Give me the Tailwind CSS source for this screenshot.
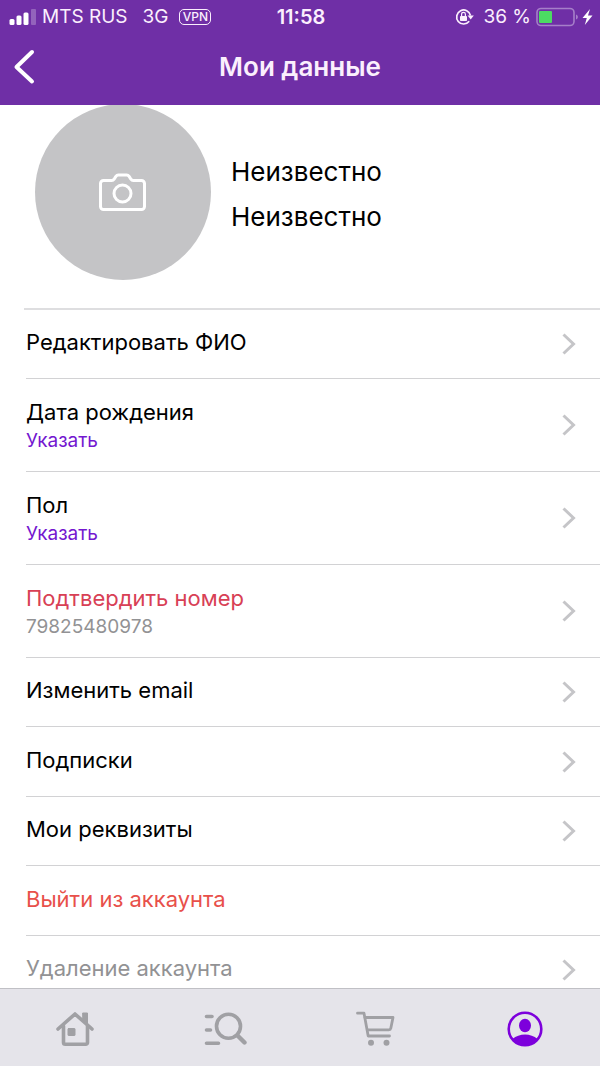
<!DOCTYPE html>
<html lang="ru">
<head>
<meta charset="utf-8">
<meta name="viewport" content="width=device-width, initial-scale=1">
<title>Мои данные</title>
<script src="https://cdn.jsdelivr.net/npm/@tailwindcss/browser@4"></script>
</head>
<body class="flex h-screen flex-col overflow-hidden bg-white font-['Inter','Noto_Sans',sans-serif] text-black">
<svg class="hidden" aria-hidden="true">
  <symbol id="chevron" viewBox="0 0 14 22"><path d="M1.5 1.5 11.500 11l-10 9.500" fill="none" stroke="#c5c5c8" stroke-width="3"/></symbol>
</svg>

<header class="shrink-0 bg-[#6f2fa6] text-[#fbeffd]">
  <div class="grid h-[33px] grid-cols-[1fr_auto_1fr] items-center pl-[9px] pr-[7px] text-[19px] leading-8">
    <div class="flex items-center">
      <svg class="mr-[6px] h-4 w-[27px]" viewBox="0 0 27 16" fill="#fff" aria-hidden="true">
        <rect x="0.500" y="10" width="5" height="6" rx="1.500"/><rect x="7.500" y="6.500" width="5" height="9.500" rx="1.500"/><rect x="14.500" y="3.500" width="5" height="12.500" rx="1.500"/><rect x="22" y="0" width="5" height="16" rx="1" opacity=".25"/>
      </svg>
      <span>MTS RUS</span>
      <span class="ml-[15px]">3G</span>
      <span class="ml-[11px] flex h-4 w-8 items-center justify-center rounded-[5px] border border-[#fbeffd] text-[12px] font-medium leading-3">VPN</span>
    </div>
    <span class="text-[20px] font-semibold">11:58</span>
    <div class="flex items-center justify-end">
      <svg class="mr-[9px] h-[18px] w-[19px]" viewBox="0 0 19 18" aria-hidden="true">
        <path d="M14.200 13.300A7 7 0 1 1 15.500 7.500" fill="none" stroke="#fbeffd" stroke-width="1.700"/>
        <path d="M12.600 7.500h6.200l-3.100 4z" fill="#fbeffd"/>
        <rect x="5" y="8" width="7" height="5" rx=".8" fill="#fbeffd"/>
        <path d="M6.600 8.500V6.300a1.900 1.900 0 0 1 3.800 0v2.200" fill="none" stroke="#fbeffd" stroke-width="1.200"/>
      </svg>
      <span>36 %</span>
      <svg class="ml-[5px] h-5 w-[57px]" viewBox="0 0 57 20" aria-hidden="true">
        <rect x="1" y="1.500" width="37" height="17" rx="4" fill="none" stroke="#a67fc9" stroke-width="1.600"/>
        <rect x="3" y="4" width="13" height="12" rx="1" fill="#4cdb63"/>
        <path d="M40 7.500c2.500 1 2.500 4 0 5z" fill="#a67fc9"/>
        <path d="M54 2 46.500 11h4.300l-2 7L56.500 8.500H52z" fill="#fff"/>
      </svg>
    </div>
  </div>
  <div class="grid h-[72px] grid-cols-[1fr_auto_1fr] items-center px-3 pb-1">
    <a href="#back" aria-label="Назад" class="justify-self-start">
      <svg class="h-9 w-6" viewBox="0 0 24 36" fill="none" stroke="#fff" stroke-width="4" stroke-linecap="round" stroke-linejoin="round" aria-hidden="true"><path d="M20 3 4.500 18 20 32.500"/></svg>
    </a>
    <h1 class="text-[26px] font-semibold leading-8">Мои данные</h1>
  </div>
</header>

<main class="min-h-0 flex-1 overflow-hidden">
  <section class="flex h-[203px] items-start pl-[35px]">
    <button type="button" aria-label="Добавить фото" class="-mt-px flex size-44 shrink-0 items-center justify-center rounded-full bg-[#c4c4c6] pb-px pr-px">
      <svg class="h-[38px] w-[47px]" viewBox="0 0 47 38" fill="none" stroke="#fff" stroke-width="3" stroke-linejoin="round" aria-hidden="true">
        <path d="M4.500 7.500h8.300c1.200 0 1.700-.4 2.300-1.300l1.600-2.600c.7-1 1.300-1.600 2.600-1.600h8.400c1.300 0 1.900.6 2.600 1.600l1.600 2.600c.6.900 1.100 1.300 2.300 1.300h8.300a3 3 0 0 1 3 3V33.500a3 3 0 0 1-3 3h-38a3 3 0 0 1-3-3V10.500a3 3 0 0 1 3-3z"/>
        <circle cx="23.500" cy="20.500" r="8.500"/>
      </svg>
    </button>
    <div class="mt-11 pl-5 text-[26px] leading-[45px]">
      <p>Неизвестно</p>
      <p>Неизвестно</p>
    </div>
  </section>

  <nav aria-label="Данные профиля" class="ml-6 border-t-2 border-[#dedee0] pl-[2px] text-[22px] leading-7">
    <a href="#name" class="flex h-[69px] items-center justify-between border-b border-[#d2d2d4] pr-6">
      <span class="pb-1">Редактировать ФИО</span><svg class="h-[22px] w-[14px]"><use href="#chevron"/></svg>
    </a>
    <a href="#birthday" class="flex h-[93px] items-center justify-between border-b border-[#d2d2d4] pr-6">
      <span class="pt-[3px]">Дата рождения<span class="mt-px block text-[19px] text-[#7417d0]">Указать</span></span><svg class="h-[22px] w-[14px]"><use href="#chevron"/></svg>
    </a>
    <a href="#gender" class="flex h-[93px] items-center justify-between border-b border-[#d2d2d4] pr-6">
      <span class="pt-[3px]">Пол<span class="mt-px block text-[19px] text-[#7417d0]">Указать</span></span><svg class="h-[22px] w-[14px]"><use href="#chevron"/></svg>
    </a>
    <a href="#phone" class="flex h-[93px] items-center justify-between border-b border-[#d2d2d4] pr-6">
      <span class="pt-[3px] text-[#d84055]">Подтвердить номер<span class="mt-px block text-[19px] text-[#929294]">79825480978</span></span><svg class="h-[22px] w-[14px]"><use href="#chevron"/></svg>
    </a>
    <a href="#email" class="flex h-[69px] items-center justify-between border-b border-[#d2d2d4] pr-6">
      <span class="pb-1">Изменить email</span><svg class="h-[22px] w-[14px]"><use href="#chevron"/></svg>
    </a>
    <a href="#subscriptions" class="flex h-[70px] items-center justify-between border-b border-[#d2d2d4] pr-6">
      <span class="pb-1">Подписки</span><svg class="h-[22px] w-[14px]"><use href="#chevron"/></svg>
    </a>
    <a href="#requisites" class="flex h-[69px] items-center justify-between border-b border-[#d2d2d4] pr-6">
      <span class="pb-1">Мои реквизиты</span><svg class="h-[22px] w-[14px]"><use href="#chevron"/></svg>
    </a>
    <button type="button" class="flex h-[70px] w-full items-center border-b border-[#d2d2d4] pr-6 text-[#e8504a]">
      <span class="pb-1">Выйти из аккаунта</span>
    </button>
    <a href="#delete" class="flex h-[69px] items-center justify-between border-b border-[#d2d2d4] pr-6 text-[#929294]">
      <span class="pb-1">Удаление аккаунта</span><svg class="h-[22px] w-[14px]"><use href="#chevron"/></svg>
    </a>
  </nav>
</main>

<nav aria-label="Разделы" class="grid h-[78px] shrink-0 grid-cols-4 items-center justify-items-center border-t border-[#c0c0c5] bg-[#e5e4ea] pt-[2px] text-[#a0a0a4]">
  <a href="#home" aria-label="Главная">
    <svg class="h-10 w-10" viewBox="0 0 40 40" fill="none" stroke="currentColor" stroke-width="3.600" stroke-linecap="round" stroke-linejoin="round" aria-hidden="true">
      <path d="M3 20 20 5l17 15"/><path d="M8.500 17v16.500a1.800 1.800 0 0 0 1.800 1.800h20.400a1.800 1.800 0 0 0 1.800-1.800V17"/>
      <path d="M28 4h4.500v12L28 12z" fill="currentColor" stroke-width="1"/><rect x="13" y="19.500" width="7" height="7" rx=".5" fill="currentColor" stroke-width="1"/>
    </svg>
  </a>
  <a href="#catalog" aria-label="Каталог">
    <svg class="h-10 w-11" viewBox="0 0 44 40" fill="none" stroke="currentColor" stroke-width="3.600" stroke-linecap="round" aria-hidden="true">
      <circle cx="25.500" cy="17.200" r="12"/><path d="m34.500 26.500 7 7" stroke-width="4.400"/><path d="M3.500 7.500h5.500M3.500 21h4M3.500 34.300h12"/>
    </svg>
  </a>
  <a href="#cart" aria-label="Корзина">
    <svg class="h-10 w-10" viewBox="0 0 40 40" fill="none" stroke="currentColor" stroke-width="2.800" stroke-linecap="round" stroke-linejoin="round" aria-hidden="true">
      <path d="M2.500 4.200H9l4.200 22.800h21.300"/><path d="M10 8.500h28l-2.200 10.800c-.2 1-.8 1.500-1.900 1.500H12.300"/>
      <circle cx="16" cy="33.800" r="3" fill="currentColor" stroke="none"/><circle cx="31.500" cy="33.800" r="3" fill="currentColor" stroke="none"/>
    </svg>
  </a>
  <a href="#profile" aria-label="Профиль" aria-current="page" class="text-[#7d00dc]">
    <svg class="size-9" viewBox="0 0 36 36" aria-hidden="true">
      <circle cx="18" cy="18" r="16.300" fill="none" stroke="currentColor" stroke-width="2.600"/>
      <ellipse cx="18" cy="14.500" rx="6" ry="6.800" fill="currentColor"/>
      <path d="M5.500 28C12 22 24 22 30.500 28 24.500 36.500 11.500 36.500 5.500 28z" fill="currentColor"/>
    </svg>
  </a>
</nav>
</body>
</html>
